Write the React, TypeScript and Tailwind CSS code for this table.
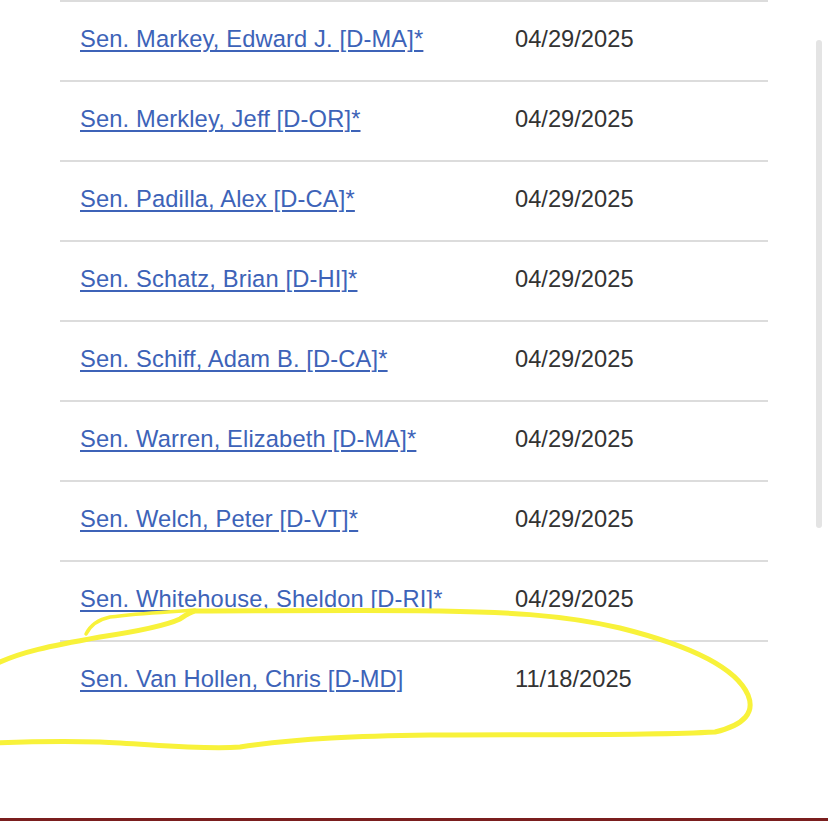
const ROWS = [
  { name: "Sen. Markey, Edward J. [D-MA]*", date: "04/29/2025" },
  { name: "Sen. Merkley, Jeff [D-OR]*", date: "04/29/2025" },
  { name: "Sen. Padilla, Alex [D-CA]*", date: "04/29/2025" },
  { name: "Sen. Schatz, Brian [D-HI]*", date: "04/29/2025" },
  { name: "Sen. Schiff, Adam B. [D-CA]*", date: "04/29/2025" },
  { name: "Sen. Warren, Elizabeth [D-MA]*", date: "04/29/2025" },
  { name: "Sen. Welch, Peter [D-VT]*", date: "04/29/2025" },
  { name: "Sen. Whitehouse, Sheldon [D-RI]*", date: "04/29/2025" },
  { name: "Sen. Van Hollen, Chris [D-MD]", date: "11/18/2025" },
];

export default function App() {
  return (
    <div
      className="relative h-[821px] w-[828px] overflow-hidden bg-white"
      style={{ fontFamily: '"Liberation Sans", Arial, sans-serif' }}
    >
      {/* Cosponsor table */}
      <div className="ml-[60px] w-[708px]">
        {ROWS.map((r) => (
          <div
            key={r.name}
            className="flex h-[80px] items-center border-t-2 border-[#dcdcdc] pb-[3px]"
          >
            <a
              href="#"
              className="w-[455px] pl-[20px] text-[23.7px] tracking-[0.14px] text-[#3d63b8] underline decoration-[1.5px] underline-offset-[3px]"
            >
              {r.name}
            </a>
            <span className="text-[23.7px] text-[#333333]">{r.date}</span>
          </div>
        ))}
      </div>

      {/* Scrollbar */}
      <div className="absolute left-[816px] top-[40px] h-[488px] w-[6px] rounded-full bg-[#e4e4e4]" />

      {/* Highlighter annotation */}
      <svg
        className="pointer-events-none absolute inset-0"
        width="828"
        height="821"
        viewBox="0 0 828 821"
        fill="none"
      >
        <path
          d="M-4 664 C 20 652, 50 646, 100 637 C 140 631, 165 626, 180 619 C 186 615, 190 612, 195 611 C 260 611, 380 610, 440 611 C 500 612, 560 614, 620 628 C 680 643, 735 665, 748 695 C 755 712, 745 725, 715 732 C 640 736, 540 734, 430 735 C 360 736, 300 738, 240 747 C 200 750, 150 744, 100 742 C 60 741, 20 742, -4 743"
          stroke="#f8f23a"
          strokeWidth="5"
          strokeLinecap="round"
          strokeLinejoin="round"
        />
        <path
          d="M86 634 C 90 626, 96 620, 110 617 C 140 613, 170 612, 195 610"
          stroke="#f8f23a"
          strokeWidth="3.5"
          strokeLinecap="round"
        />
      </svg>

      {/* Bottom bar */}
      <div className="absolute bottom-0 left-0 h-[3px] w-full bg-[#7a1e1e]" />
    </div>
  );
}
